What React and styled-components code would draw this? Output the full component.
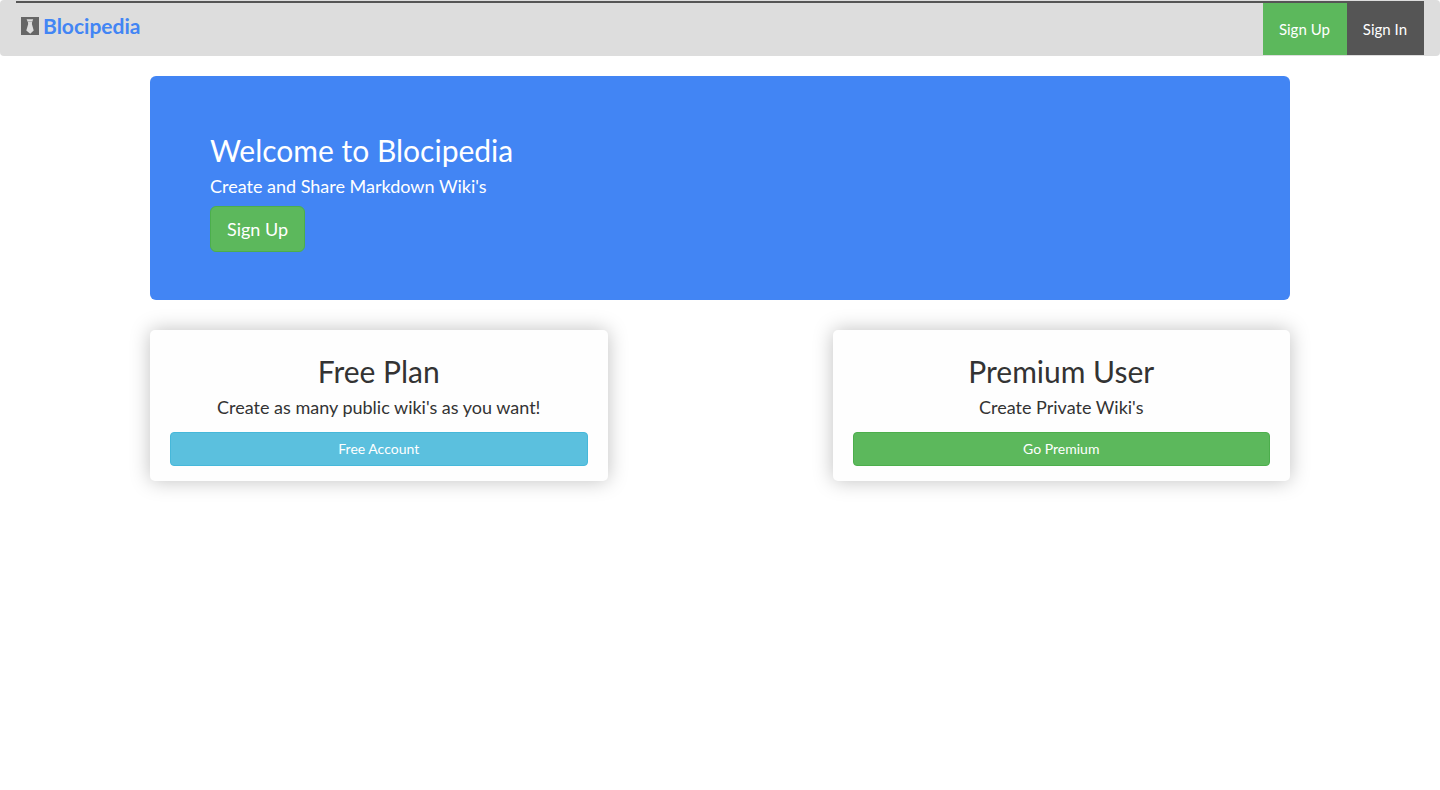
import React from 'react';
import styled, { createGlobalStyle } from 'styled-components';

const GlobalStyle = createGlobalStyle`
  *, *::before, *::after { box-sizing: border-box; }
  body {
    margin: 0;
    background: #fff;
    color: #333;
    font-family: Lato, "Liberation Sans", sans-serif;
    font-size: 14px;
    line-height: 20px;
  }
`;

const palettes = {
  success: { fill: '#5cb85c', edge: '#4cae4c' },
  info: { fill: '#5bc0de', edge: '#46b8da' },
};

const Navbar = styled.header`
  display: flex;
  height: 56px;
  padding: 1px 16px;
  margin-bottom: 20px;
  background: #ddd;
  border-radius: 4px;
`;

const NavInner = styled.nav`
  flex: 1;
  display: flex;
  justify-content: space-between;
  align-items: flex-start;
  border-top: 2px solid #555;
`;

const Brand = styled.a`
  display: flex;
  align-items: center;
  gap: 4px;
  padding: 10px 5px;
  color: #4285f4;
  font-size: 21px;
  line-height: 26px;
  font-weight: 700;
  text-decoration: none;
`;

const NavLinks = styled.ul`
  display: flex;
  align-self: stretch;
  margin: 0;
  padding: 0;
  list-style: none;
`;

const NavLink = styled.a`
  display: flex;
  align-items: center;
  height: 100%;
  padding: 0 17px 0 16px;
  background: ${(p) => (p.$highlight ? '#5cb85c' : '#555')};
  color: #fff;
  font-size: 15px;
  line-height: 20px;
  text-decoration: none;
`;

const Container = styled.main`
  max-width: 1170px;
  margin: 0 auto;
  padding: 0 15px 30px;
`;

const Hero = styled.section`
  padding: 48px 60px;
  margin-bottom: 30px;
  background: #4285f4;
  border-radius: 6px;
  color: #fff;
`;

const HeroTitle = styled.h1`
  margin: 10px 0;
  font-size: 30px;
  line-height: 32px;
  font-weight: 400;
`;

const HeroText = styled.p`
  margin: 0 0 10px;
  font-size: 18px;
  line-height: 20px;
`;

const Button = styled.button`
  display: ${(p) => (p.$block ? 'block' : 'inline-block')};
  width: ${(p) => (p.$block ? '100%' : 'auto')};
  padding: ${(p) => (p.$large ? '10px 16px' : '6px 12px')};
  border: 1px solid ${(p) => palettes[p.$tone].edge};
  border-radius: ${(p) => (p.$large ? '6px' : '4px')};
  background: ${(p) => palettes[p.$tone].fill};
  color: #fff;
  font-family: inherit;
  font-size: ${(p) => (p.$large ? '18px' : '14px')};
  line-height: ${(p) => (p.$large ? '24px' : '20px')};
  vertical-align: top;
  cursor: pointer;
`;

const Plans = styled.section`
  display: grid;
  grid-template-columns: repeat(12, 1fr);
  column-gap: 30px;
`;

const PlanCard = styled.article`
  grid-column: span 5;
  padding: 25px 20px 15px;
  background: #fefefe;
  border-radius: 5px;
  box-shadow: 0 0 20px rgba(0, 0, 0, 0.25);
  text-align: center;

  & + & { grid-column: 8 / span 5; }
`;

const PlanTitle = styled.h2`
  margin: 0 0 10px;
  font-size: 30px;
  line-height: 32px;
  font-weight: 400;
`;

const PlanText = styled.p`
  margin: 0 0 15px;
  font-size: 18px;
  line-height: 20px;
`;

function TieIcon() {
  return (
    <svg width="18" height="18" viewBox="0 0 18 18" aria-hidden="true">
      <path fill="#666" d="M0 0H18V18H0Z" />
      <path fill="#ddd" d="M5.6 2.2H12.2L11.1 5L10.9 7L12.7 13.5L9.2 16.8L5.3 13.5L7.2 7L6.9 5Z" />
      <path stroke="#999" strokeWidth="0.7" d="M6.7 4.6H11.2" />
    </svg>
  );
}

const plans = [
  { title: 'Free Plan', text: "Create as many public wiki's as you want!", action: 'Free Account', tone: 'info' },
  { title: 'Premium User', text: "Create Private Wiki's", action: 'Go Premium', tone: 'success' },
];

export default function App() {
  return (
    <>
      <GlobalStyle />
      <Navbar>
        <NavInner>
          <Brand href="#"><TieIcon />Blocipedia</Brand>
          <NavLinks>
            <li><NavLink href="#signup" $highlight>Sign Up</NavLink></li>
            <li><NavLink href="#signin">Sign In</NavLink></li>
          </NavLinks>
        </NavInner>
      </Navbar>
      <Container>
        <Hero>
          <HeroTitle>Welcome to Blocipedia</HeroTitle>
          <HeroText>Create and Share Markdown Wiki's</HeroText>
          <Button type="button" $tone="success" $large>Sign Up</Button>
        </Hero>
        <Plans>
          {plans.map((plan) => (
            <PlanCard key={plan.title}>
              <PlanTitle>{plan.title}</PlanTitle>
              <PlanText>{plan.text}</PlanText>
              <Button type="button" $tone={plan.tone} $block>{plan.action}</Button>
            </PlanCard>
          ))}
        </Plans>
      </Container>
    </>
  );
}
